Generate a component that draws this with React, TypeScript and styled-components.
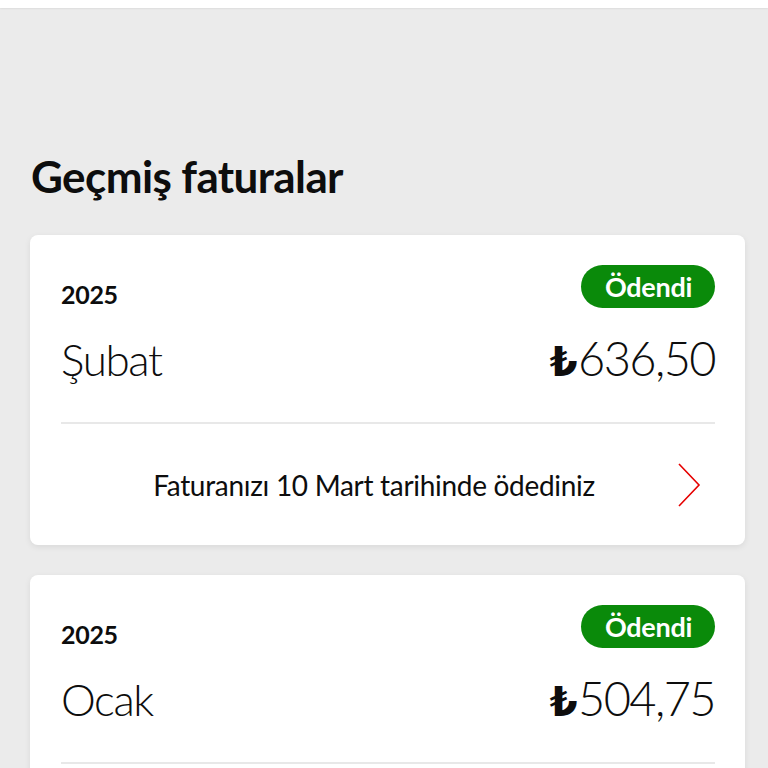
import React from "react";
import styled, { createGlobalStyle } from "styled-components";

const Global = createGlobalStyle`
  html, body { margin: 0; padding: 0; }
  body {
    background: #ebebeb;
    font-family: Lato, "Open Sans", "DejaVu Sans", sans-serif;
    color: #0d0d0d;
  }
`;

const Page = styled.div`
  min-height: 768px;
  background: #ebebeb;
`;

const TopBar = styled.div`
  height: 8px;
  background: #ffffff;
  box-shadow: 0 1px 2px rgba(0, 0, 0, 0.06);
`;

const Content = styled.main`
  padding: 0 23px 0 30px;
  display: flex;
  flex-direction: column;
`;

const Title = styled.h1`
  margin: 146px 0 0 1px;
  font-size: 44px;
  line-height: 44px;
  font-weight: 700;
  letter-spacing: -0.6px;
`;

const List = styled.div`
  margin-top: 37px;
  display: flex;
  flex-direction: column;
  gap: 30px;
`;

const Card = styled.section`
  background: #ffffff;
  border-radius: 8px;
  box-shadow: 0 2px 6px rgba(0, 0, 0, 0.08);
  padding: 30px 30px 0 31px;
  display: flex;
  flex-direction: column;
`;

const HeadRow = styled.div`
  display: flex;
  justify-content: space-between;
  align-items: flex-start;
  height: 43px;
`;

const Year = styled.span`
  margin-top: 15px;
  font-size: 25px;
  line-height: 28px;
  font-weight: 700;
  letter-spacing: -0.3px;
`;

const Badge = styled.span`
  height: 43px;
  box-sizing: border-box;
  padding: 0 23px 0 24px;
  border-radius: 22px;
  background: #0a8a0a;
  color: #ffffff;
  font-size: 27px;
  font-weight: 700;
  display: flex;
  align-items: center;
  letter-spacing: -0.3px;
`;

const AmountRow = styled.div`
  margin-top: 25px;
  height: 50px;
  display: flex;
  justify-content: space-between;
  align-items: baseline;
`;

const Month = styled.span`
  font-size: 44px;
  line-height: 50px;
  font-weight: 300;
  letter-spacing: -1.4px;
`;

const Amount = styled.span`
  font-size: 47px;
  line-height: 50px;
  font-weight: 300;
  letter-spacing: -1.6px;
`;

const Lira = styled.span`
  font-family: "DejaVu Sans", sans-serif;
  font-weight: 700;
  font-size: 40px;
  margin-right: 2px;
`;

const Divider = styled.hr`
  margin: 39px 0 0;
  border: 0;
  height: 2px;
  background: #e8e8e8;
`;

const Footer = styled.div`
  height: 121px;
  display: flex;
  align-items: center;
  justify-content: space-between;
`;

const FooterText = styled.span`
  flex: 1;
  text-align: center;
  font-size: 28px;
  font-weight: 400;
  letter-spacing: -0.3px;
  padding-left: 10px;
`;

const Chevron = styled.svg`
  width: 24px;
  height: 44px;
  margin-right: 14px;
  flex: none;
`;

type Bill = { year: string; month: string; amount: string; note: string };

const bills: Bill[] = [
  { year: "2025", month: "Şubat", amount: "636,50", note: "Faturanızı 10 Mart tarihinde ödediniz" },
  { year: "2025", month: "Ocak", amount: "504,75", note: "Faturanızı 10 Şubat tarihinde ödediniz" },
];

export default function App() {
  return (
    <Page>
      <Global />
      <TopBar />
      <Content>
        <Title>Geçmiş faturalar</Title>
        <List>
          {bills.map((b, i) => (
            <Card key={i}>
              <HeadRow>
                <Year>{b.year}</Year>
                <Badge>Ödendi</Badge>
              </HeadRow>
              <AmountRow>
                <Month>{b.month}</Month>
                <Amount>
                  <Lira>₺</Lira>
                  {b.amount}
                </Amount>
              </AmountRow>
              <Divider />
              <Footer>
                <FooterText>{b.note}</FooterText>
                <Chevron viewBox="0 0 24 44">
                  <path d="M2 1 L22 22 L2 43" fill="none" stroke="#e60000" strokeWidth="1.6" />
                </Chevron>
              </Footer>
            </Card>
          ))}
        </List>
      </Content>
    </Page>
  );
}
